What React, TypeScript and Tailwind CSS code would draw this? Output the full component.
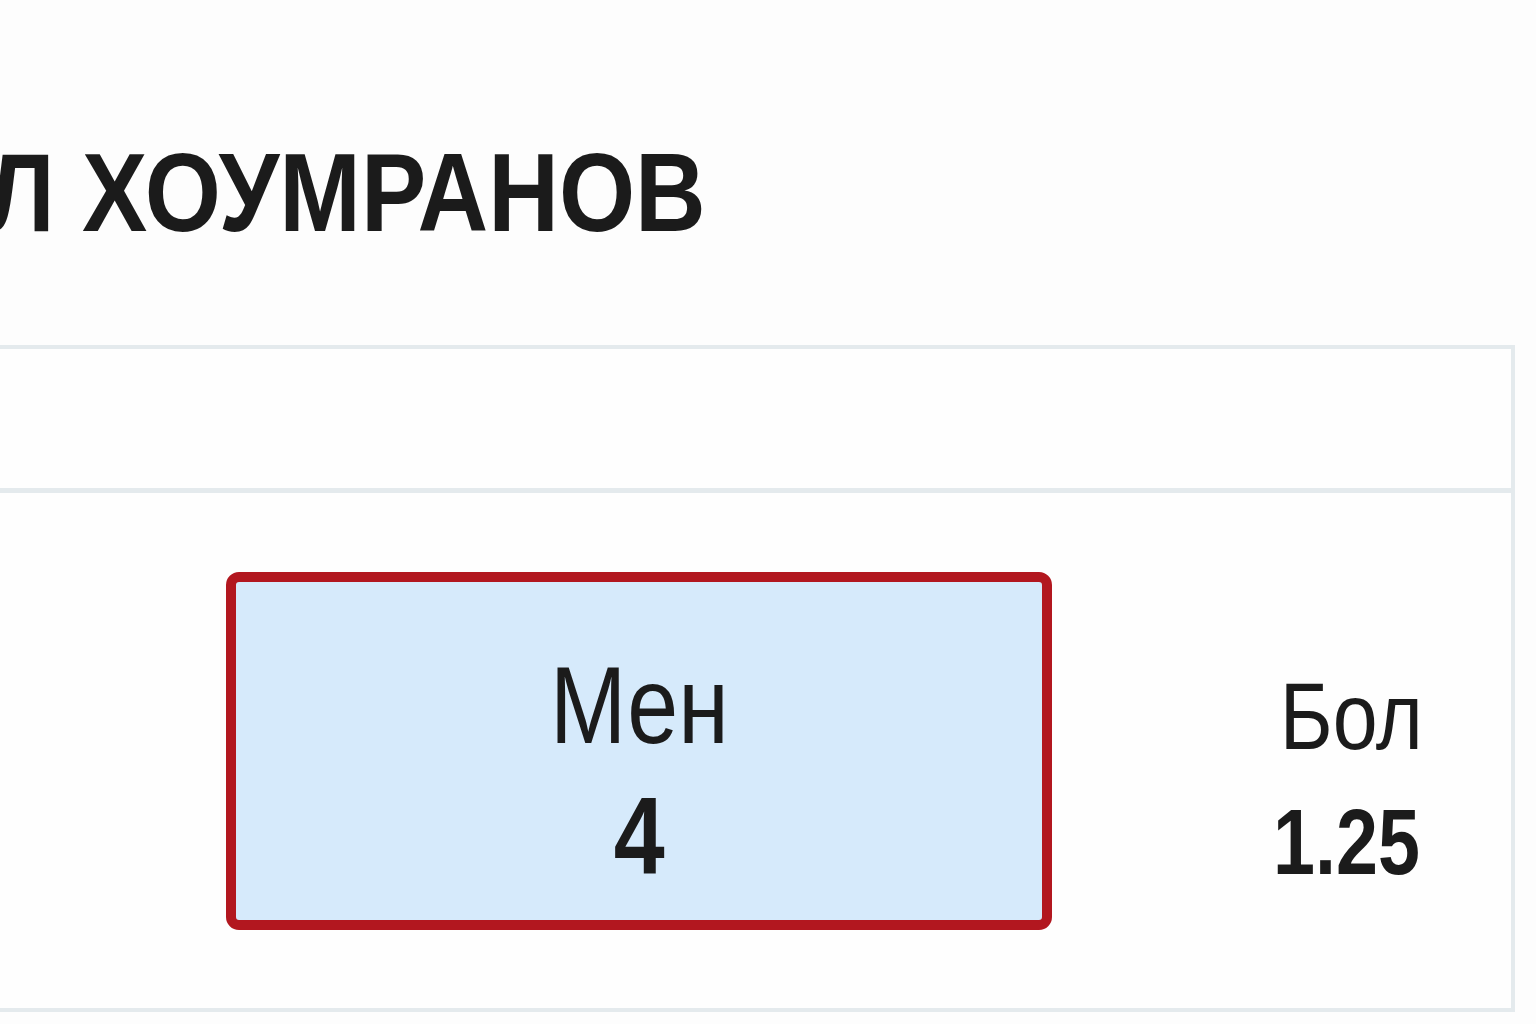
import React from "react";

export default function App() {
  return (
    <div
      className="w-[1536px] h-[1024px] overflow-hidden bg-[#fdfdfd] text-[#1b1b1b]"
      style={{ fontFamily: '"Liberation Sans", Arial, sans-serif' }}
    >
      <div className="h-[345px] pt-[137px]">
        <div className="flex justify-end w-[706px]">
          <h1 className="shrink-0 whitespace-nowrap text-[112px] leading-none font-bold origin-right scale-x-[0.874]">
            ТОТАЛ ХОУМРАНОВ
          </h1>
        </div>
      </div>
      <div className="-ml-[40px] w-[1555px] h-[667px] border-[4px] border-[#e4eaed] bg-[#fefefe] flex flex-col">
        <div className="h-[144px] shrink-0 border-b-[5px] border-[#e4eaed]" />
        <div className="flex-1 flex items-center">
          <div className="w-[262px] shrink-0" />
          <div className="w-[826px] h-[358px] shrink-0 rounded-[13px] border-[10px] border-[#b2171f] bg-[#d6eafb] flex flex-col items-center justify-center pt-[40px]">
            <span className="block text-[109px] leading-none font-normal scale-x-[0.84]">Мен</span>
            <span className="block mt-[21px] text-[109px] leading-none font-bold scale-x-[0.84]">4</span>
          </div>
          <div className="w-[130px] shrink-0" />
          <div className="flex-1 flex flex-col items-center justify-center pt-[55px]">
            <span className="block translate-x-[5px] text-[95px] leading-none font-normal scale-x-[0.85]">Бол</span>
            <span className="block mt-[32px] text-[92px] leading-none font-bold scale-x-[0.82]">1.25</span>
          </div>
        </div>
      </div>
    </div>
  );
}
